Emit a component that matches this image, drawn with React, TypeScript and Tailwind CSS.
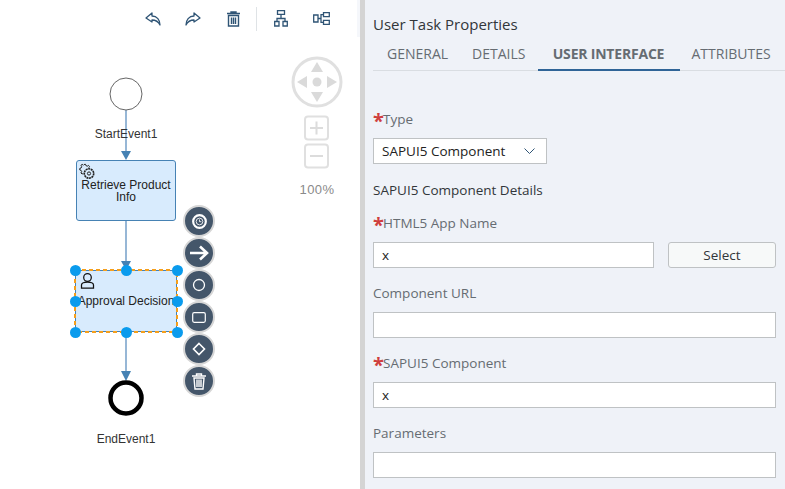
import React from "react";

const font = "font-['Open_Sans','Liberation_Sans',sans-serif]";
const diagramFont = "font-['Liberation_Sans',sans-serif]";
const label = "text-[13.5px] leading-[20px] text-[#666c72]";
const field = "h-[26px] bg-white border border-[#bfc2c4] flex items-center px-2 text-[13.5px] text-[#222]";

function Req({ children }: { children: React.ReactNode }) {
  return (
    <div className={label + " flex items-center h-[20px]"}>
      <span className="text-[#cf3e3e] text-[20px] font-bold leading-none mt-[4px] w-[10px]">*</span>
      <span>{children}</span>
    </div>
  );
}

function Field({ title, required, children }: { title: string; required?: boolean; children: React.ReactNode }) {
  return (
    <div className="flex flex-col gap-[9px]">
      {required ? <Req>{title}</Req> : <div className={label}>{title}</div>}
      {children}
    </div>
  );
}

function ToolIcon({ children }: { children: React.ReactNode }) {
  return <div className="w-[40px] flex justify-center">{children}</div>;
}

function Toolbar() {
  const c = "#2f5475";
  return (
    <div className="flex items-center justify-end h-[37px] pr-[19px]">
      <ToolIcon>
        <svg width="16" height="14" viewBox="0 0 16 14" fill="none" stroke={c} strokeWidth="1.3">
          <path d="M7 1 L1 6 L7 10 V8 C10 8 13 9 15 13 C15 8 12 4 7 4 Z" strokeLinejoin="round" />
        </svg>
      </ToolIcon>
      <ToolIcon>
        <svg width="16" height="14" viewBox="0 0 16 14" fill="none" stroke={c} strokeWidth="1.3">
          <path d="M9 1 L15 6 L9 10 V8 C6 8 3 9 1 13 C1 8 4 4 9 4 Z" strokeLinejoin="round" />
        </svg>
      </ToolIcon>
      <ToolIcon>
        <svg width="13" height="16" viewBox="0 0 13 16" fill="none" stroke={c} strokeWidth="1.4">
          <path d="M0 2.5 H13 M4 2.5 V1 H9 V2.5 M1.5 4.5 H11.5 V15 H1.5 Z M4.5 6.5 V13 M6.5 6.5 V13 M8.5 6.5 V13" />
        </svg>
      </ToolIcon>
      <div className="w-px h-[24px] bg-[#dfe3e6] ml-[3px] mr-[4px]" />
      <ToolIcon>
        <svg width="14" height="17" viewBox="0 0 14 17" fill="none" stroke={c} strokeWidth="1.3">
          <path d="M3.5 .7 H10.5 V4.3 H3.5 Z M.7 11.5 H5 V16 H.7 Z M9 11.5 H13.3 V16 H9 Z M7 4.3 V8.5 M3 11.5 V8.5 H11 V11.5" />
        </svg>
      </ToolIcon>
      <ToolIcon>
        <svg width="17" height="13" viewBox="0 0 17 13" fill="none" stroke={c} strokeWidth="1.3">
          <path d="M.7 3 H5 V10 H.7 Z M10.5 .7 H16.3 V4.7 H10.5 Z M10.5 8.3 H16.3 V12.3 H10.5 Z M5 6.5 H8 M10.5 2.7 H8 V10.3 H10.5" />
        </svg>
      </ToolIcon>
    </div>
  );
}

function Handle({ x, y }: { x: number; y: number }) {
  return <div className="absolute w-[11px] h-[11px] rounded-full bg-[#0a9bed]" style={{ left: x - 5.5, top: y - 5.5 }} />;
}

function Pad({ children }: { children: React.ReactNode }) {
  return (
    <div className="w-[32px] h-[32px] rounded-full bg-[#44566a] border-2 border-[#d6d6d6] flex items-center justify-center">
      {children}
    </div>
  );
}

function Canvas() {
  const s = { stroke: "#fff", fill: "none" };
  return (
    <>
      <svg className="absolute left-0 top-0" width="360" height="489">
        <g stroke="#97b7d6" strokeWidth="2">
          <path d="M126 110 V155 M126 221 V264 M126 331 V372" />
        </g>
        <g fill="#4682b4">
          <path d="M121 151 H131 L126 160 Z M121 261 H131 L126 270 Z M121 371 H131 L126 381 Z" />
        </g>
        <circle cx="126" cy="94" r="16" fill="#fff" stroke="#666" strokeWidth="1" />
        <circle cx="126" cy="398" r="15.5" fill="#fff" stroke="#000" strokeWidth="4.5" />
        <circle cx="317" cy="82" r="24" fill="#fff" stroke="#e0e0e0" strokeWidth="3" />
        <g fill="#dadada">
          <path d="M317 62 L323 72 H311 Z M317 102 L323 92 H311 Z M297 82 L307 76 V88 Z M337 82 L327 76 V88 Z" />
          <circle cx="317" cy="82" r="4.5" />
        </g>
        <g fill="none" stroke="#e0e0e0" strokeWidth="2">
          <rect x="305" y="116.5" width="23" height="23" rx="3" />
          <rect x="305" y="144.5" width="23" height="23" rx="3" />
          <path d="M310 128 H323 M316.5 121.5 V134.5 M310 156 H323" stroke="#dcdcdc" />
        </g>
      </svg>

      <div className={"absolute left-[66px] w-[120px] top-[127px] text-center text-[12px] leading-[15px] text-[#333] " + diagramFont}>StartEvent1</div>
      <div className={"absolute left-[66px] w-[120px] top-[432px] text-center text-[12px] leading-[15px] text-[#333] " + diagramFont}>EndEvent1</div>

      <div className={"absolute left-[76px] top-[160px] w-[100px] h-[61px] rounded-[3px] bg-[#d8ebfd] border border-[#4682b4] text-center text-[12px] leading-[12px] text-[#222] pt-[18px] " + diagramFont}>
        <svg className="absolute left-[1px] top-[2px]" width="18" height="17" viewBox="0 0 17 17" fill="none" stroke="#222" strokeWidth="1">
          <path d="M5.5 1.5 L7 1.3 L7.4 2.6 L8.8 3.2 L10 2.4 L11 3.6 L10.3 4.8" />
          <path d="M4.8 10.3 L3.6 11 L2.4 10 L3.2 8.6 L2.6 7.4 L1.3 7 L1.3 5.4 L2.6 5 L3.2 3.6 L2.4 2.4 L3.6 1.4 L5 2.2" />
          <circle cx="10.5" cy="10.5" r="4.7" strokeDasharray="2 .6" strokeWidth="1.6" />
          <circle cx="10.5" cy="10.5" r="1.6" />
        </svg>
        Retrieve Product
        <br />
        Info
      </div>

      <div className={"absolute left-[75px] top-[270px] w-[102px] h-[62px] bg-[#d8ebfd] border border-[#4682b4] text-center text-[12px] leading-[15px] text-[#222] pt-[23px] whitespace-nowrap " + diagramFont}>
        <svg className="absolute left-[4px] top-[1px]" width="15" height="18" viewBox="0 0 15 17" fill="none" stroke="#111" strokeWidth="1.25">
          <circle cx="7.5" cy="5" r="3.8" />
          <path d="M1.5 15.5 V12.5 C1.5 10.5 4 9.5 7.5 9.5 C11 9.5 13.5 10.5 13.5 12.5 V15.5 Z" />
        </svg>
        Approval Decision
      </div>
      <svg className="absolute left-[73px] top-[268px]" width="106" height="66" fill="none">
        <rect x="2" y="2" width="102" height="62" stroke="#f59f1c" strokeWidth="2" strokeDasharray="4 3" />
      </svg>

      <Handle x={75} y={270} />
      <Handle x={126} y={270} />
      <Handle x={177} y={270} />
      <Handle x={75} y={301} />
      <Handle x={177} y={301} />
      <Handle x={75} y={332} />
      <Handle x={126} y={332} />
      <Handle x={177} y={332} />

      <div className="absolute left-[183px] top-[205px] flex flex-col">
        <Pad>
          <svg width="15" height="15" viewBox="0 0 18 18" fill="none">
            <circle cx="9" cy="9" r="7.6" stroke="#fff" strokeWidth="2.6" />
            <circle cx="9" cy="9" r="4" stroke="#fff" strokeWidth="1" />
            <path d="M9 6.5 V9.2 H11.2" stroke="#fff" strokeWidth="1" />
          </svg>
        </Pad>
        <Pad>
          <svg width="20" height="16" viewBox="0 0 20 16" fill="none" stroke="#fff" strokeWidth="2.6">
            <path d="M1 8 H18 M11 1.5 L18 8 L11 14.5" />
          </svg>
        </Pad>
        <Pad>
          <svg width="14" height="14" viewBox="0 0 14 14" {...s} strokeWidth="1.3">
            <circle cx="7" cy="7" r="5.5" />
          </svg>
        </Pad>
        <Pad>
          <svg width="14" height="11" viewBox="0 0 14 11" {...s} strokeWidth="1.2">
            <rect x=".7" y=".7" width="12.6" height="9.6" rx="1.5" />
          </svg>
        </Pad>
        <Pad>
          <svg width="14" height="14" viewBox="0 0 14 14" {...s} strokeWidth="1.6">
            <path d="M7 1.5 L12.5 7 L7 12.5 L1.5 7 Z" />
          </svg>
        </Pad>
        <Pad>
          <svg width="14" height="17" viewBox="0 0 14 17" {...s} strokeWidth="1.4">
            <path d="M0 3 H14 M4.5 3 V1 H9.5 V3 M2 5 L3 16 H11 L12 5 Z M5 6.5 V14 M7 6.5 V14 M9 6.5 V14" />
          </svg>
        </Pad>
      </div>

      <div className={"absolute left-[287px] w-[60px] top-[182px] text-center text-[13px] leading-[15px] tracking-[.4px] text-[#8a8a8a] " + diagramFont}>100%</div>
    </>
  );
}

function Properties() {
  return (
    <div className={"flex-1 bg-[#eff2f8] pl-[8px] " + font}>
      <div className="pt-[13px] h-[41px] text-[15px] leading-[22px] text-[#32363a]">User Task Properties</div>
      <div className="flex h-[30px] pl-[2px] border-b border-[#d9dde2] text-[14px] leading-[22px] text-[#666c72]">
        <div className="px-[12px] pt-[2px]">GENERAL</div>
        <div className="px-[12px] pt-[2px]">DETAILS</div>
        <div className="w-[142px] h-[30px] pt-[2px] text-center font-bold tracking-[-.2px] border-b-2 border-[#2f6497]">USER INTERFACE</div>
        <div className="px-[12px] pt-[2px]">ATTRIBUTES</div>
      </div>
      <div className="pr-[9px] pt-[38px] flex flex-col gap-[15px]">
        <Field title="Type" required>
          <div className={"w-[174px] justify-between " + field}>
            <span>SAPUI5 Component</span>
            <svg width="11" height="6" viewBox="0 0 11 6" fill="none" stroke="#2f5475" className="mr-[3px]"><path d="M.5 .5 L5.5 5.5 L10.5 .5" /></svg>
          </div>
        </Field>
        <div className="text-[13.5px] leading-[20px] text-[#32363a] -mb-[2px] mt-[1px]">SAPUI5 Component Details</div>
        <Field title="HTML5 App Name" required>
          <div className="flex gap-[14px]">
            <div className={"w-[281px] " + field}>x</div>
            <div className="flex-1 h-[26px] rounded-[3px] bg-[#f7f9f9] border border-[#bfc2c4] text-center text-[13.5px] leading-[24px] text-[#32363a]">Select</div>
          </div>
        </Field>
        <Field title="Component URL"><div className={field} /></Field>
        <Field title="SAPUI5 Component" required><div className={field}>x</div></Field>
        <Field title="Parameters"><div className={field} /></Field>
      </div>
    </div>
  );
}

export default function App() {
  return (
    <div className="flex w-[785px] h-[489px] overflow-hidden bg-white">
      <div className="relative w-[360px] shrink-0">
        <div className="absolute left-[357px] top-0 w-[3px] h-[37px] bg-[#f5f7fb]" />
        <Toolbar />
        <Canvas />
      </div>
      <div className="w-[5px] shrink-0 bg-[#d4d4d4]" />
      <Properties />
    </div>
  );
}
